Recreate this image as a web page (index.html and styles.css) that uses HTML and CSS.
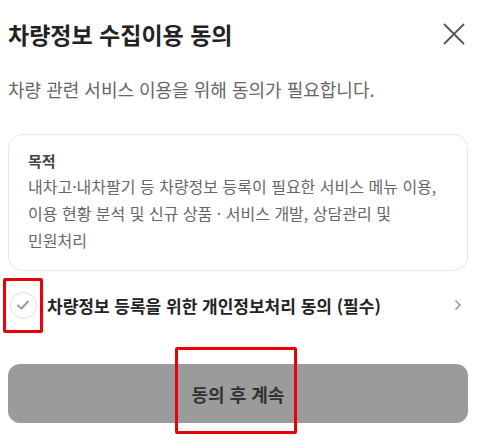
FILE: index.html
```html
<!DOCTYPE html>
<html lang="ko">
<head>
    <meta charset="UTF-8">
    <meta name="viewport" content="width=device-width, initial-scale=1.0">
    <title>차량정보 수집이용 동의</title>
    <link rel="stylesheet" href="styles.css">
</head>
<body>
    <div class="sheet">
        <div class="header">
            <h1>차량정보 수집이용 동의</h1>
            <button class="close" aria-label="닫기">
                <svg width="24" height="24" viewBox="0 0 24 24">
                    <path d="M2 2 L22 22 M22 2 L2 22" stroke="#555" stroke-width="1.8" fill="none"/>
                </svg>
            </button>
        </div>
        <p class="desc">차량 관련 서비스 이용을 위해 동의가 필요합니다.</p>

        <div class="card">
            <div class="card-title">목적</div>
            <div class="card-text">내차고·내차팔기 등 차량정보 등록이 필요한 서비스 메뉴 이용,<br>이용 현황 분석 및 신규 상품 · 서비스 개발, 상담관리 및<br>민원처리</div>
        </div>

        <div class="agree-row">
            <span class="check-wrap">
                <span class="check">
                    <svg width="14" height="12" viewBox="0 0 14 12">
                        <path d="M2 6.5 L5.5 9.5 L12 2.5" stroke="#999" stroke-width="2" fill="none" stroke-linecap="round" stroke-linejoin="round"/>
                    </svg>
                </span>
            </span>
            <span class="agree-text">차량정보 등록을 위한 개인정보처리 동의 (필수)</span>
            <svg class="chevron" width="8" height="12" viewBox="0 0 8 12">
                <path d="M1.5 1.5 L6 6 L1.5 10.5" stroke="#999" stroke-width="1.5" fill="none"/>
            </svg>
        </div>

        <div class="submit-wrap">
            <button class="submit">동의 후 계속</button>
            <div class="highlight"></div>
        </div>
    </div>
</body>
</html>
```

FILE: styles.css
```css
html, body {
    height: 100%;
}
body {
    margin: 0;
    background-color: #fff;
    font-family: "Noto Sans CJK KR", "Noto Sans", sans-serif;
    color: #222;
}
.sheet {
    padding: 16px 9px 26px 8px;
}
.header {
    display: flex;
    justify-content: space-between;
    align-items: center;
    height: 36px;
}
h1 {
    margin: 0;
    font-size: 23px;
    font-weight: 700;
    line-height: 36px;
    color: #222;
}
.close {
    background: none;
    border: none;
    padding: 0;
    margin-right: 2px;
    width: 24px;
    height: 24px;
    cursor: pointer;
}
.desc {
    margin: 25px 0 0;
    font-size: 18px;
    line-height: 24px;
    color: #666;
}
.card {
    margin-top: 33px;
    border: 1px solid #e6e6e6;
    border-radius: 14px;
    padding: 14px 19px 16px;
}
.card-title {
    font-size: 15px;
    font-weight: 700;
    line-height: 24px;
    color: #444;
}
.card-text {
    font-size: 16px;
    line-height: 27px;
    color: #666;
}
.agree-row {
    display: flex;
    align-items: center;
    margin-top: 6px;
    height: 56px;
}
.check-wrap {
    box-sizing: border-box;
    width: 40px;
    height: 55px;
    margin-left: -5px;
    border: 3px solid #e8000b;
    border-radius: 2px;
    display: flex;
    align-items: center;
    justify-content: center;
}
.check {
    box-sizing: border-box;
    width: 27px;
    height: 27px;
    border: 1px solid #ddd;
    border-radius: 50%;
    display: flex;
    align-items: center;
    justify-content: center;
}
.agree-text {
    flex: 1;
    margin-left: 4px;
    font-size: 17px;
    font-weight: 700;
    color: #222;
}
.chevron {
    margin-right: 6px;
}
.submit-wrap {
    position: relative;
    margin-top: 31px;
}
.submit {
    display: block;
    width: 100%;
    height: 59px;
    background-color: #9b9b9b;
    border: none;
    border-radius: 12px;
    font-family: inherit;
    font-size: 18px;
    font-weight: 700;
    color: #333;
    cursor: pointer;
}
/* red frame drawn over the button label */
.highlight {
    position: absolute;
    left: 167px;
    top: -17px;
    width: 122px;
    height: 87px;
    box-sizing: border-box;
    border: 3px solid #e8000b;
    border-radius: 2px;
    pointer-events: none;
}
```
